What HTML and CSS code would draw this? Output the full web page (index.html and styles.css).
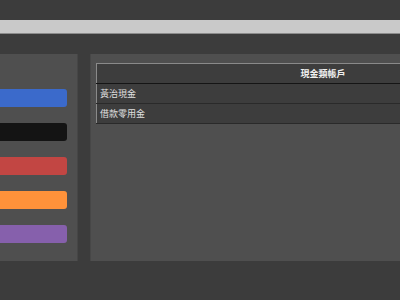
FILE: index.html
```html
<!DOCTYPE html>
<html lang="zh-Hant">
<head>
    <meta charset="UTF-8">
    <meta name="viewport" content="width=device-width, initial-scale=1.0">
    <title>現金類帳戶</title>
    <link rel="stylesheet" href="styles.css">
</head>
<body>
    <div class="topbar"></div>

    <div class="main">
        <div class="side">
            <div class="btn blue"></div>
            <div class="btn black"></div>
            <div class="btn red"></div>
            <div class="btn orange"></div>
            <div class="btn purple"></div>
        </div>

        <div class="content">
            <table class="accounts">
                <thead>
                    <tr><th>現金類帳戶</th></tr>
                </thead>
                <tbody>
                    <tr><td>黃治現金</td></tr>
                    <tr><td>借款零用金</td></tr>
                </tbody>
            </table>
        </div>
    </div>
</body>
</html>
```

FILE: styles.css
```css
body {
    margin: 0;
    background-color: #3c3c3c;
    font-family: "Noto Sans CJK TC", "Liberation Sans", sans-serif;
    overflow: hidden;
}

.topbar {
    margin-top: 20px;
    height: 13px;
    background-color: #c9c9c9;
    border-bottom: 1px solid #8c8c8c;
}

.main {
    display: flex;
    gap: 12px;
    margin-top: 20px;
    height: 207px;
}

.side {
    flex: 0 0 120px;
    margin-left: -42px;
    box-sizing: border-box;
    padding: 35px 10px 0 10px;
    background-color: #4f4f4f;
    border-right: 1px solid #464646;
    display: flex;
    flex-direction: column;
    gap: 16px;
}

.btn {
    height: 18px;
    border-radius: 3px;
}

.blue { background-color: #3b6acb; }
.black { background-color: #141414; }
.red { background-color: #c24643; }
.orange { background-color: #ff923a; }
.purple { background-color: #8660ac; }

.content {
    flex: 1;
    min-width: 0;
    overflow: hidden;
    box-sizing: border-box;
    padding: 9px 0 0 5px;
    background-color: #4f4f4f;
    border-left: 1px solid #474747;
}

.accounts {
    width: 454px;
    border-collapse: collapse;
    border: 1px solid #8a8a8a;
    background-color: #3d3d3d;
    font-size: 9px;
}

.accounts th {
    height: 19px;
    padding: 0;
    color: #f0f0f0;
    font-weight: bold;
    text-align: center;
    border-bottom: 1px solid #151515;
}

.accounts td {
    height: 19px;
    padding: 0 3px;
    color: #e0e0e0;
    border-bottom: 1px solid #2a2a2a;
}
```
